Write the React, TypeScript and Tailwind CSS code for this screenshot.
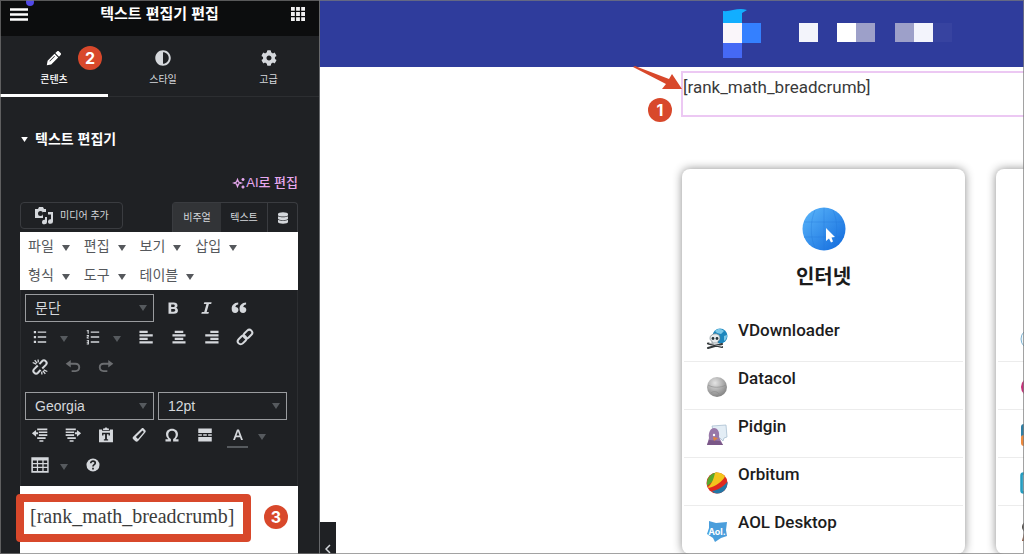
import React from 'react';
import { FaAdjust, FaCog, FaDatabase } from 'react-icons/fa';

const Badge: React.FC<{ n: number; className: string }> = ({ n, className }) => (
    <span className={`absolute z-20 flex items-center justify-center w-6 h-6 rounded-full bg-[#d8482b] text-white text-base font-bold font-['Inter',sans-serif] ${className}`}>
        {n}
    </span>
);

const Caret: React.FC<{ className?: string }> = ({ className = '' }) => (
    <svg viewBox="0 0 8 6" className={`w-2 h-1.5 shrink-0 ${className}`} fill="currentColor">
        <path d="M0 0h8L4 6z" />
    </svg>
);

const Icon: React.FC<{ children: React.ReactNode; className?: string }> = ({ children, className = 'w-[18px] h-[18px]' }) => (
    <svg viewBox="0 0 16 16" className={className} fill="currentColor">{children}</svg>
);

// Toolbar glyphs, all on a 16px grid
const icons = {
    bold: <Icon><path fillRule="evenodd" d="M4 3h4.600c2.200 0 3.400 1 3.400 2.700 0 1.100-.6 1.800-1.500 2.100 1.200.3 1.900 1.100 1.900 2.400 0 1.900-1.300 2.900-3.600 2.900H4zm2.400 1.800v2.300h1.700c1 0 1.500-.4 1.500-1.200s-.5-1.100-1.500-1.100zm0 4v2.500h2c1 0 1.600-.4 1.600-1.300s-.6-1.200-1.600-1.200z" /></Icon>,
    italic: <Icon><path d="M6.500 2.800h6.500l-.4 1.600h-2l-2 7.200h2l-.5 1.600H3.800l.5-1.600h2.100l2-7.200H6z" /></Icon>,
    quote: <Icon><path d="M7.300 3.200v1.700C5.800 5.200 5 5.900 4.800 7c1.700.1 2.700 1.100 2.700 2.600 0 1.700-1.100 2.800-2.900 2.800-1.900 0-3.100-1.400-3.100-3.600 0-3.200 2-5.300 5.800-5.600zM14.300 3.200v1.700c-1.500.3-2.300 1-2.500 2.100 1.700.1 2.700 1.100 2.700 2.600 0 1.700-1.100 2.800-2.900 2.800-1.900 0-3.100-1.400-3.100-3.600 0-3.200 2-5.300 5.800-5.600z" /></Icon>,
    bullets: <Icon><path d="M2.500 2.600h2v2h-2zM2.500 7h2v2h-2zM2.500 11.400h2v2h-2zM6 3h7.500v1.200H6zM6 7.400h7.500v1.200H6zM6 11.800h7.500V13H6z" /></Icon>,
    numbers: <Icon><path d="M3.200 1.700h1v3.300h-1zM2.400 2h1v.8h-1zM2.400 6.200h2v1.600h-1v.7h1v.9h-2V7.500h1v-.5h-1zM2.400 10.600h2v4h-2v-.8h1V13h-1v-.8h1v-.8h-1zM6 3h7.500v1.200H6zM6 7.400h7.500v1.200H6zM6 11.800h7.500V13H6z" /></Icon>,
    left: <Icon><path d="M2.200 2.500h7.300v1.900H2.200zM2.200 5.600H14v1.900H2.200zM2.200 8.700h7.300v1.900H2.200zM2.200 11.800H14v1.900H2.200z" /></Icon>,
    center: <Icon><path d="M4.200 2.500h7.600v1.900H4.200zM2.200 5.600h11.600v1.900H2.200zM4.200 8.700h7.600v1.900H4.200zM2.200 11.800h11.600v1.900H2.200z" /></Icon>,
    right: <Icon><path d="M6.500 2.500h7.300v1.900H6.500zM2 5.600h11.800v1.900H2zM6.500 8.700h7.300v1.900H6.500zM2 11.800h11.800v1.900H2z" /></Icon>,
    link: (
        <Icon>
            <g transform="rotate(-45 8 8)" fill="none" stroke="currentColor" strokeWidth="1.800">
                <rect x="0" y="5.400" width="8.600" height="5.200" rx="2.600" />
                <rect x="7.400" y="5.400" width="8.600" height="5.200" rx="2.600" />
            </g>
        </Icon>
    ),
    unlink: (
        <Icon>
            <g fill="none" stroke="currentColor" strokeWidth="1.800">
                <path d="M7.500 5.500l2.300-2.600a2.300 2.300 0 0 1 3.400 3.200L10 9.300M8.500 10.500l-2.300 2.600a2.300 2.300 0 0 1-3.400-3.200L6 6.700" />
                <path strokeWidth="1.200" d="M1.500 4l3.200 1.500M3.300 1.800l2 2.800M6.300 1.300l.2 2.600M14.500 12l-3.200-1.500M12.700 14.200l-2-2.800M9.700 14.700l-.2-2.600" />
            </g>
        </Icon>
    ),
    undo: <Icon><path d="M6 1.800v2.500h4.200c2.500 0 4.200 1.500 4.200 3.900s-1.700 4.200-4.200 4.200H6.800v-1.600h3.200c1.600 0 2.700-1 2.700-2.600S11.600 5.900 10 5.900H6v2.500L1.500 5.100z" /></Icon>,
    redo: <Icon><path d="M10 1.800v2.500H5.800c-2.500 0-4.200 1.500-4.200 3.900s1.700 4.200 4.200 4.200h3.400v-1.600H6c-1.600 0-2.700-1-2.700-2.600S4.400 5.900 6 5.900h4v2.500l4.500-3.300z" /></Icon>,
    outdent: <Icon><path d="M5.500 2.200h9v1.500h-9zM7 4.800h7.500v1.500H7zM7 7.400h7.500v1.500H7zM5.500 10H13v1.500H5.500zM7.500 12.600H11v1.500H7.500zM.8 6.500l3.700-3v2h1.800v1.900H4.500v2.100z" /></Icon>,
    indent: <Icon><path d="M1.500 2.200h9v1.500h-9zM1.500 4.800H9v1.500H1.500zM1.500 7.400H9v1.500H1.500zM3 10h7.500v1.500H3zM5 12.600h3.500v1.500H5zM15.200 6.500l-3.700-3v2H9.700v1.900h1.800v2.100z" /></Icon>,
    paste: <Icon><path fillRule="evenodd" d="M1.800 3h2.700v1.200h7V3h2.700v11.500H1.800zM5.400 2.200h1.300c.3-1.200 2.300-1.200 2.600 0h1.300v1.300H5.400zM4.500 6v2.400h1.200v-1h1.500v4.300H6.100v1.200h3.800v-1.200H8.800V7.400h1.500v1h1.200V6z" /></Icon>,
    eraser: <Icon><path fillRule="evenodd" d="M10.300 2.200c.6-.5 1.300-.5 1.800 0l1.500 1.500c.5.5.5 1.200.1 1.800l-6.500 7.800c-.7.8-1.700.8-2.400.2L2.900 11.800c-.7-.7-.7-1.600-.1-2.300zm.8 1.700L5.200 9.800l1.900 1.800 5.200-6.300z" /></Icon>,
    omega: <Icon><path d="M8 2.500c3.100 0 5.300 2 5.300 4.900 0 1.800-.8 3.100-2.100 4.400h2.600v1.900H9v-2.100c1.400-1 2.300-2.200 2.300-4.100C11.300 5.500 10 4.200 8 4.200S4.700 5.500 4.700 7.500c0 1.900.9 3.100 2.300 4.100v2.100H2.200v-1.900h2.600C3.500 10.500 2.700 9.200 2.700 7.400c0-2.900 2.200-4.900 5.300-4.900z" /></Icon>,
    more: <Icon><path d="M2 2.300h12v4H2zM2 7.300h3.200v1.400H2zM6.400 7.300h3.200v1.400H6.400zM10.800 7.300H14v1.400h-3.200zM2 9.700h12v4H2z" /></Icon>,
    color: <Icon><path fillRule="evenodd" d="M7.100 3h1.800l3.500 9.500h-1.700l-.9-2.600H6.200l-.9 2.600H3.600zM8 4.900L6.700 8.500h2.600z" /></Icon>,
    table: <Icon><path fillRule="evenodd" d="M.3 1.200h15.400v13.600H.3zM1.700 4v2.200h3.500V4zm4.600 0v2.200h3.800V4zm4.900 0v2.200h3.200V4zM1.700 7.300v2.300h3.500V7.300zm4.600 0v2.300h3.800V7.300zm4.900 0v2.300h3.200V7.300zM1.700 10.700v2.600h3.500v-2.600zm4.600 0v2.600h3.800v-2.600zm4.900 0v2.600h3.200v-2.600z" /></Icon>,
    help: <Icon><circle cx="8" cy="8" r="5.800" /><path fill="none" stroke="#1f2124" strokeWidth="1.500" d="M6 6.400C6 3.900 10 4.100 10 6.300 10 7.700 8 7.700 8 9.300M8 10.400V12" /></Icon>,
};

const Tool: React.FC<{ label: string; icon: keyof typeof icons; dim?: boolean }> = ({ label, icon, dim }) => (
    <button aria-label={label} className={`flex items-center justify-center w-[33px] h-[30px] ${dim ? 'text-[#6b6d70]' : 'text-[#d5d8dc]'}`}>
        {icons[icon]}
    </button>
);

const Drop: React.FC<{ label: string }> = ({ label }) => (
    <button aria-label={label} className="flex items-center w-5 h-[30px] pl-1 pt-1 text-[#565a5e]">
        <Caret />
    </button>
);

const ListBox: React.FC<{ label: string; value: string }> = ({ label, value }) => (
    <div className="relative w-[129px]">
        <select aria-label={label} className="block w-full h-7 px-[9px] appearance-none border border-[#9a9c9f] bg-transparent text-sm text-[#d5d8dc]">
            <option>{value}</option>
        </select>
        <Caret className="absolute right-[7px] top-[11px] text-[#565a5e] pointer-events-none" />
    </div>
);

const Menu: React.FC<{ label: string }> = ({ label }) => (
    <button className="flex items-center gap-2 h-[29px] pr-3.5 pb-0.5 text-sm text-[#55585c]">
        {label}
        <Caret className="mt-1" />
    </button>
);

const siteIcons = {
    vdownloader: (
        <>
            <circle cx="14" cy="8" r="7.500" fill="#1c86bd" />
            <path d="M9 3c3-3 7-2 9 0l-3 3-4-1zM18 8l3-1c0 3-1 5-3 6z" fill="#7cc8e8" />
            <path d="M4 10c0-5 10-6 10 0 0 2-1 3-2 3v2H6v-2c-1 0-2-1-2-3z" fill="#e8ecee" stroke="#66757c" strokeWidth=".6" />
            <circle cx="7" cy="10.500" r="1.400" fill="#26343b" />
            <circle cx="11" cy="10.500" r="1.400" fill="#26343b" />
            <path d="M2 15.500l14 3.500M2 20l14-4" stroke="#34393b" strokeWidth="2.200" strokeLinecap="round" />
            <path d="M3 15l13 3.500" stroke="#d2d6d8" strokeWidth=".8" />
        </>
    ),
    datacol: (
        <>
            <circle cx="11" cy="11" r="10" fill="url(#silver)" />
            <path d="M2 9c5 3 12 3 18 0M5 17c2-2 6-2 8 1" stroke="#8a8a8a" strokeWidth=".6" fill="none" />
        </>
    ),
    pidgin: (
        <>
            <path d="M6 2l14-1 1 12-3 1-1 3-3-3H9z" fill="#e3edf5" stroke="#a9bfd0" strokeWidth=".8" />
            <path d="M1 21l2-7C2 8 5 4 8 4s6 3 5 9l4 8z" fill="#9878a8" />
            <path d="M1 21l2-5 11 1 3 4z" fill="#7a5787" />
            <circle cx="8" cy="11" r="1.200" fill="#fff" />
            <path d="M7 13l5 1-4 3z" fill="#e6843a" />
        </>
    ),
    orbitum: (
        <>
            <circle cx="11" cy="11" r="10.500" fill="#e0291f" />
            <path d="M1 14C0 7 4 1 11 .5c-1 5-4 10-10 13.500z" fill="#57a82c" />
            <path d="M2 15C6 12 8 6 9 .7c4-.7 8 .8 10 3.800C16 10 10 14 2.500 16z" fill="#f2c51c" />
            <path d="M6 19c7-1 12-5 15.500-9.500.5 6-3.500 12-10.500 12-2 0-4-1-5-2.500z" fill="#2277a6" />
        </>
    ),
    aol: (
        <>
            <path d="M3 1l7 2 11-1-1 8 1 6-6 2-6 4-2-4-6-4 2-6z" fill="#4a9edc" />
            <text x="11" y="15" textAnchor="middle" fontSize="9" fontWeight="bold" fill="#fff" fontFamily="Inter, sans-serif">Aol.</text>
        </>
    ),
    ring: <circle cx="11" cy="11" r="10" fill="#eff7fb" stroke="#7fb3d2" />,
    pink: <circle cx="11" cy="11" r="10" fill="#c8307a" />,
    duo: (
        <>
            <rect x="1" width="20" height="14" rx="3" fill="#2f7fa5" />
            <rect x="1" y="11" width="20" height="11" rx="3" fill="#ef8a3d" />
        </>
    ),
    tile: <rect x="1.500" y="1.500" width="19" height="19" rx="2" fill="#8cc9e0" stroke="#259dc0" strokeWidth="2.500" />,
    figure: (
        <>
            <circle cx="8" cy="7" r="5" fill="#b9b4ae" stroke="#4b4643" strokeWidth="2" />
            <path d="M4 13l-2 8h9z" fill="#8b4f35" />
        </>
    ),
};

interface Site {
    name: string;
    icon: keyof typeof siteIcons;
}

const internet: Site[] = [
    { name: 'VDownloader', icon: 'vdownloader' },
    { name: 'Datacol', icon: 'datacol' },
    { name: 'Pidgin', icon: 'pidgin' },
    { name: 'Orbitum', icon: 'orbitum' },
    { name: 'AOL Desktop', icon: 'aol' },
];

const nextColumn: Site[] = [
    { name: '', icon: 'ring' },
    { name: '', icon: 'pink' },
    { name: '', icon: 'duo' },
    { name: '', icon: 'tile' },
    { name: '', icon: 'figure' },
];

const Card: React.FC<{ title?: string; sites: Site[]; children?: React.ReactNode }> = ({ title, sites, children }) => (
    <section className="w-[283px] shrink-0 rounded-lg bg-white px-0.5 shadow-[0_0_10px_rgba(0,0,0,0.45)]">
        <div className="flex flex-col items-center h-[145px] pt-[38px]">
            {children}
            <h2 className="mt-3 text-xl font-bold text-[#1b1b1b]">{title}</h2>
        </div>
        <ul>
            {sites.map((s) => (
                <li key={s.icon} className="h-12 border-b border-[#ececec] last:border-b-0">
                    <a href="#" aria-label={s.name || s.icon} className="flex gap-2.5 pl-[22px] text-[#1d1d1d] font-['Roboto',sans-serif] font-medium text-[17px] leading-6">
                        <svg viewBox="0 0 22 22" className="w-[22px] h-[22px] mt-3.5">{siteIcons[s.icon]}</svg>
                        <span className="pt-1">{s.name}</span>
                    </a>
                </li>
            ))}
        </ul>
    </section>
);

const Sidebar: React.FC = () => (
    <aside className="flex flex-col w-80 shrink-0 bg-[#1f2124] text-[#d5d8dc] border-r border-[#66686b]">
        <header className="flex items-center justify-between h-9 pb-2 pl-2.5 pr-3.5 bg-[#0c0d0e] text-white">
            <button aria-label="메뉴" className="relative">
                <svg viewBox="0 0 18 13" className="w-[18px] h-[13px]" stroke="#fff" strokeWidth="2.400">
                    <path d="M0 1.500h18M0 6.500h18M0 11.500h18" />
                </svg>
                <span className="absolute left-4 -top-2.5 w-2 h-2 rounded-full bg-[#5148e8]" />
            </button>
            <h1 className="text-[15px] font-bold">텍스트 편집기 편집</h1>
            <button aria-label="위젯">
                <svg viewBox="0 0 14 14" className="w-3.5 h-3.5" fill="#f1f1f1">
                    <path d="M0 0h3.800v3.800H0zM5.100 0h3.800v3.800H5.100zM10.200 0H14v3.800h-3.800zM0 5.100h3.800v3.800H0zM5.100 5.100h3.800v3.800H5.100zM10.200 5.100H14v3.800h-3.800zM0 10.200h3.800V14H0zM5.100 10.200h3.800V14H5.100zM10.200 10.200H14V14h-3.800z" />
                </svg>
            </button>
        </header>

        <nav className="grid grid-cols-[108px_110px_1fr] h-[61px] border-b border-[#2c2e31] text-[10px]">
            <button className="relative flex flex-col items-center gap-1.5 pt-3.5 -mb-px border-b-[3px] border-white text-white font-medium">
                <svg viewBox="0 0 16 16" className="w-4 h-4" fill="#fff">
                    <path fillRule="evenodd" d="M11 1.500c.6-.6 1.400-.6 2 0l1.600 1.600c.6.6.6 1.400 0 2L13 6.700 9.300 3zM8.500 3.800l3.700 3.700-7 7L.8 15.300l.8-4.600zM8.400 6.100l-5 5 .5.500 5-5z" />
                </svg>
                콘텐츠
                <Badge n={2} className="left-[78px] top-2.5" />
            </button>
            <button className="flex flex-col items-center gap-1.5 pt-3.5">
                <FaAdjust className="w-4 h-4" />
                스타일
            </button>
            <button className="flex flex-col items-center gap-1.5 pt-3.5">
                <FaCog className="w-4 h-4" />
                고급
            </button>
        </nav>

        <button className="flex items-center gap-1.5 h-[84px] pl-5 text-white text-sm font-bold">
            <Caret className="w-[9px] h-[5px]" />
            텍스트 편집기
        </button>

        <div className="flex flex-col flex-1 ml-5 mr-[21px]">
            <button className="flex items-center self-end h-1 text-[13px] font-medium text-[#e7a8ef]">
                <svg viewBox="0 0 14 14" className="w-3.5 h-3.5" fill="none" stroke="currentColor" strokeWidth="1.300">
                    <path d="M5.500 3.500l1 2.500 2.800 1-2.800 1-1 2.500L4.500 8 1.700 7l2.800-1z" />
                    <path strokeWidth="1.600" d="M11 2v3M9.500 3.500h3M11 9.500v3M9.500 11h3" />
                </svg>
                AI로 편집
            </button>

            <div className="flex justify-between mt-[17px] text-[10px]">
                <button className="flex items-center gap-1.5 h-[27px] px-[13px] rounded border border-[#3a3c40]">
                    <svg viewBox="0 0 20 18" className="w-5 h-[18px]" fill="currentColor">
                        <path fillRule="evenodd" d="M1 2h3l1-2h4l1 2h2v3H9v6H1zM6.500 4a2.500 2.500 0 1 0 0 5 2.500 2.500 0 0 0 0-5z" />
                        <path d="M14 5h5v9.500a2.500 2.300 0 1 1-2-2.200V7.500h-3zM11 10h2v5a2.500 2.300 0 1 1-2-2.200z" />
                    </svg>
                    미디어 추가
                </button>
                <div className="flex h-[30px] border border-b-0 border-[#3a3c40] rounded-t">
                    <button className="w-12 bg-[#323437]">비주얼</button>
                    <button className="w-[47px] border-r border-[#3a3c40]">텍스트</button>
                    <button aria-label="동적 태그" className="flex items-center justify-center w-[29px]">
                        <FaDatabase className="w-2.5 h-3" />
                    </button>
                </div>
            </div>

            <div className="flex flex-wrap bg-white pl-2 pr-10">
                {['파일', '편집', '보기', '삽입', '형식', '도구', '테이블'].map((m) => <Menu key={m} label={m} />)}
            </div>

            <div className="flex flex-col h-[196px] px-1 pt-1 border-x border-[#2c2e31]">
                <div className="flex items-center h-7 gap-0.5">
                    <ListBox label="형식" value="문단" />
                    <div className="flex">
                        <Tool label="굵게" icon="bold" />
                        <Tool label="기울임꼴" icon="italic" />
                        <Tool label="인용" icon="quote" />
                    </div>
                </div>
                <div className="flex -ml-0.5">
                    <Tool label="글머리 기호 목록" icon="bullets" />
                    <Drop label="글머리 기호 옵션" />
                    <Tool label="번호 목록" icon="numbers" />
                    <Drop label="번호 옵션" />
                    <Tool label="왼쪽 정렬" icon="left" />
                    <Tool label="가운데 정렬" icon="center" />
                    <Tool label="오른쪽 정렬" icon="right" />
                    <Tool label="링크 삽입" icon="link" />
                </div>
                <div className="flex -ml-0.5">
                    <Tool label="링크 제거" icon="unlink" />
                    <Tool label="실행 취소" icon="undo" dim />
                    <Tool label="다시 실행" icon="redo" dim />
                </div>
                <div className="flex gap-1 mt-2.5">
                    <ListBox label="글꼴" value="Georgia" />
                    <ListBox label="글꼴 크기" value="12pt" />
                </div>
                <div className="flex -ml-0.5">
                    <Tool label="내어쓰기" icon="outdent" />
                    <Tool label="들여쓰기" icon="indent" />
                    <Tool label="텍스트로 붙여넣기" icon="paste" />
                    <Tool label="서식 지우기" icon="eraser" />
                    <Tool label="특수 문자" icon="omega" />
                    <Tool label="더보기 태그" icon="more" />
                    <div className="relative">
                        <Tool label="글자 색상" icon="color" />
                        <span className="absolute inset-x-1.5 bottom-0.5 h-0.5 bg-[#565a5e]" />
                    </div>
                    <Drop label="글자 색상 옵션" />
                </div>
                <div className="flex -ml-0.5">
                    <Tool label="표" icon="table" />
                    <Drop label="표 옵션" />
                    <Tool label="키보드 단축키" icon="help" />
                </div>
            </div>

            <div className="relative flex-1 bg-white">
                <div className="absolute -left-1 top-2 w-[235px] h-12 border-8 border-[#d8482b] rounded">
                    <textarea
                        aria-label="텍스트 편집기 내용"
                        defaultValue="[rank_math_breadcrumb]"
                        className="block w-full h-8 pl-1.5 resize-none overflow-hidden whitespace-nowrap leading-7 bg-white text-[#3c3c3c] text-xl/7 font-['Georgia','Liberation_Serif',serif]"
                    />
                </div>
                <Badge n={3} className="left-[244px] top-[19px]" />
            </div>
        </div>
    </aside>
);

const Preview: React.FC = () => (
    <main className="relative flex-1 min-w-0 overflow-hidden bg-white">
        <header className="h-[67px] pl-[403px] pt-2 bg-[#2f3c9c]">
            <svg viewBox="0 0 230 50" className="w-[230px] h-[50px]">
                <path d="M0 3c8 1 15-4 24-1l-5 3v10H0z" fill="#12aeff" />
                <path d="M0 15h19v20H0z" fill="#faf6fa" />
                <path d="M19 15h19v20H19z" fill="#3480ff" />
                <path d="M0 35h19v15H0z" fill="#4569f5" />
                <path d="M76 15h19v19H76z" fill="#f3f4fb" />
                <path d="M114 15h19v19h-19z" fill="#fff" />
                <path d="M133 15h19v19h-19zM172 15h19v19h-19z" fill="#9da0c9" />
                <path d="M191 15h19v19h-19z" fill="#f3f4fc" />
                <path d="M210 15h19v19h-19z" fill="#3743a0" />
            </svg>
        </header>

        <div className="pl-[361px] pt-1">
            <div className="relative h-[46px] border-2 border-r-0 border-[#ecc8f3] text-[#3a3a3a] font-['Roboto',sans-serif]">
                <p className="text-[17px] leading-7">[rank_math_breadcrumb]</p>
                <svg viewBox="0 0 50 28" className="absolute -left-[50px] -top-2 w-[50px] h-7" fill="#d8482b">
                    <path d="M0 2L33 19l-4 5h20L39 9l-3 5L2 1z" />
                </svg>
                <Badge n={1} className="-left-[35px] top-[25px]" />
            </div>
        </div>

        <div className="flex gap-[31px] pl-[362px] pt-[52px]">
            <Card title="인터넷" sites={internet}>
                <svg viewBox="0 0 44 44" className="w-11 h-11">
                    <circle cx="22" cy="22" r="21.500" fill="url(#globe)" />
                    <g fill="none" stroke="#1e74d6" strokeWidth=".8" opacity=".4">
                        <path d="M2 15h40M2 30h40M22 1v42M13 3c-5 12-5 26 0 38M31 3c5 12 5 26 0 38" />
                    </g>
                    <path d="M24 21l9 9-3.500.5 1.500 4-2 1-2-4-3 2.500z" fill="#fff" />
                </svg>
            </Card>
            <Card sites={nextColumn} />
        </div>

        <button aria-label="패널 숨기기" className="absolute left-0 bottom-0 flex items-end justify-center w-4 h-8 bg-[#1f2124]">
            <svg viewBox="0 0 6 10" className="w-1.5 h-2.5" fill="none" stroke="#d5d8dc" strokeWidth="1.500">
                <path d="M5 1L1 5l4 4" />
            </svg>
        </button>
    </main>
);

export default function App() {
    return (
        <div className="relative flex min-h-screen overflow-hidden font-['Liberation_Sans','Noto_Sans_CJK_KR',sans-serif]">
            <svg className="absolute w-0 h-0">
                <defs>
                    <linearGradient id="globe" x1="0" y1="0" x2="1" y2="1">
                        <stop offset="0" stopColor="#5db8fb" />
                        <stop offset="1" stopColor="#0f68dc" />
                    </linearGradient>
                    <radialGradient id="silver" cx=".4" cy=".3" r=".7">
                        <stop offset="0" stopColor="#e4e4e4" />
                        <stop offset="1" stopColor="#858585" />
                    </radialGradient>
                </defs>
            </svg>
            <Sidebar />
            <Preview />
            <div className="absolute inset-0 z-30 border border-[#7b7b7b]/70 pointer-events-none" />
        </div>
    );
}
